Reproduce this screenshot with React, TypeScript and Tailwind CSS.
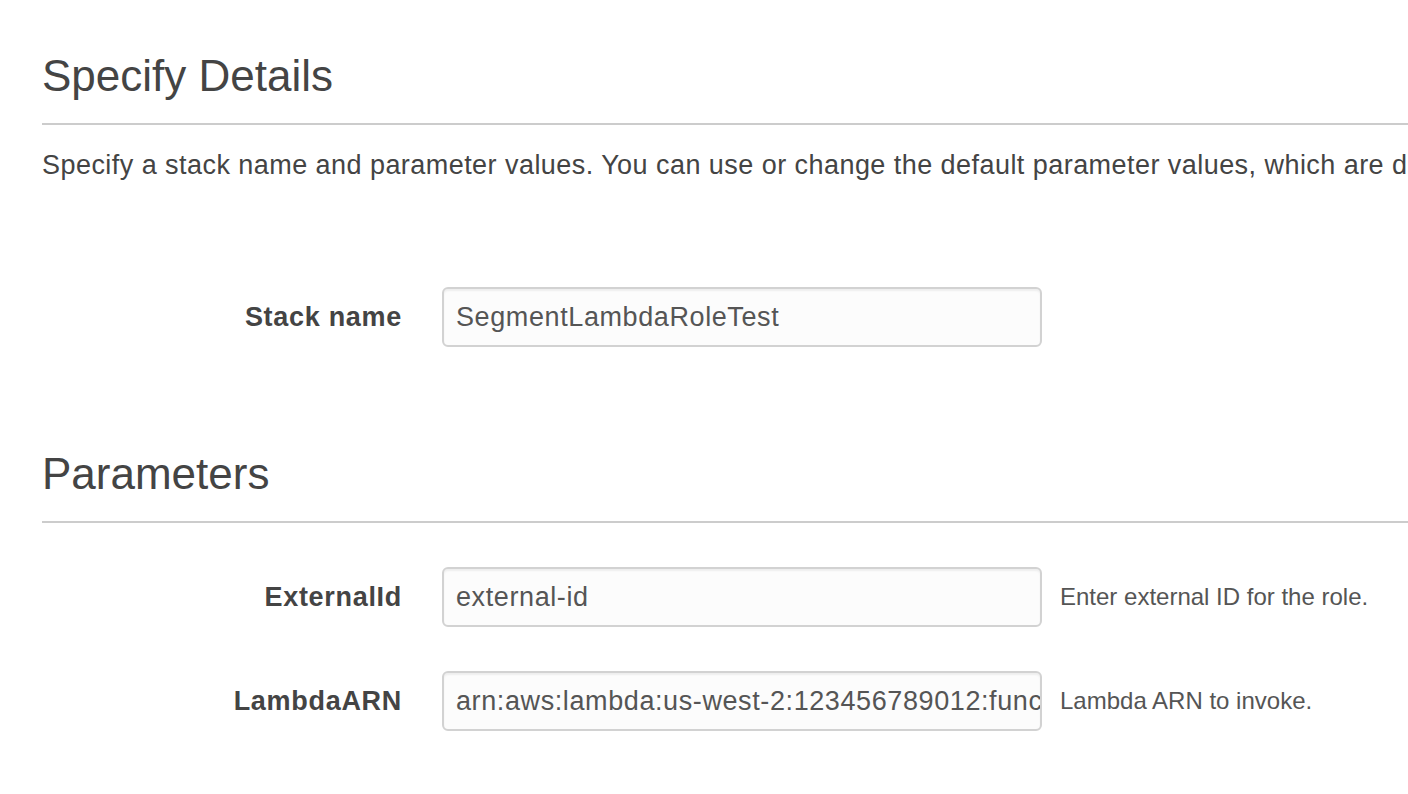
import React from 'react';

type Field = {
  label: string;
  value: string;
  help?: string;
};

const stackField: Field = { label: 'Stack name', value: 'SegmentLambdaRoleTest' };

const params: Field[] = [
  { label: 'ExternalId', value: 'external-id', help: 'Enter external ID for the role.' },
  {
    label: 'LambdaARN',
    value: 'arn:aws:lambda:us-west-2:123456789012:function:segment-lambda',
    help: 'Lambda ARN to invoke.',
  },
];

function FormRow({ field }: { field: Field }) {
  return (
    <div className="flex items-center">
      <label className="w-[360px] shrink-0 text-right text-[27px] font-bold tracking-[0.7px] text-[#444]">
        {field.label}
      </label>
      <div className="ml-[40px] flex h-[60px] w-[600px] shrink-0 items-center overflow-hidden rounded-[6px] border-2 border-[#d2d2d2] bg-[#fcfcfc] pl-[12px] shadow-[inset_0_2px_2px_rgba(0,0,0,0.06)]">
        <span className="block w-full min-w-0 overflow-hidden whitespace-nowrap text-[27px] tracking-[0.6px] text-[#555]">
          {field.value}
        </span>
      </div>
      {field.help && (
        <span className="ml-[18px] whitespace-nowrap text-[24px] text-[#555]">{field.help}</span>
      )}
    </div>
  );
}

export default function App() {
  return (
    <main
      className="h-[794px] w-full overflow-hidden bg-white pl-[42px] text-[#444]"
      style={{ fontFamily: '"Liberation Sans", Arial, sans-serif' }}
    >
      {/* ---------- Specify Details ---------- */}
      <h1 className="pt-[52px] text-[44px] leading-[48px] font-normal">Specify Details</h1>
      <div className="mt-[23px] border-t-2 border-[#cccccc]" />
      <p className="mt-[24px] overflow-hidden whitespace-nowrap text-[27px] leading-[32px] tracking-[0.45px]">
        Specify a stack name and parameter values. You can use or change the default parameter values, which are defined in the AWS CloudFormation template.
      </p>

      <div className="mt-[106px]">
        <FormRow field={stackField} />
      </div>

      {/* ---------- Parameters ---------- */}
      <h2 className="mt-[103px] text-[44px] leading-[48px] font-normal">Parameters</h2>
      <div className="mt-[23px] border-t-2 border-[#cccccc]" />

      <div className="mt-[44px] flex flex-col gap-[44px]">
        {params.map((p) => (
          <FormRow key={p.label} field={p} />
        ))}
      </div>
    </main>
  );
}
